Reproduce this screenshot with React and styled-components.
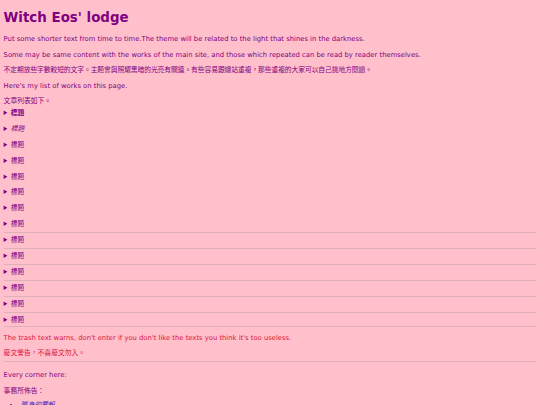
import React from 'react';
import styled, { createGlobalStyle } from 'styled-components';

const GlobalStyle = createGlobalStyle`
  html, body {
    margin: 0;
    background: #ffc0cb;
  }
  body {
    font-family: "DejaVu Sans", "Noto Sans CJK TC", sans-serif;
  }
`;

const works = [
  { title: '標題', bold: true },
  { title: '標題', italic: true },
  { title: '標題' },
  { title: '標題' },
  { title: '標題' },
  { title: '標題' },
  { title: '標題' },
  { title: '標題' },
  { title: '標題' },
  { title: '標題' },
  { title: '標題' },
  { title: '標題' },
  { title: '標題' },
  { title: '標題' },
];

const App = () => {
  return (
    <Page>
      <GlobalStyle />
      <Title>Witch Eos' lodge</Title>
      <Text>Put some shorter text from time to time.The theme will be related to the light that shines in the darkness.</Text>
      <Text>Some may be same content with the works of the main site, and those which repeated can be read by reader themselves.</Text>
      <Text $cjk>不定期放些字數較短的文字。主題會與照耀黑暗的光亮有關連。有些容易跟總站重複，那些重複的大家可以自己挑地方閱讀。</Text>
      <Text>Here's my list of works on this page.</Text>
      <Text>文章列表如下。</Text>
      <WorkList>
        {works.map((w, i) => (
          <Work key={i} $divided={i >= 8} $bold={w.bold} $italic={w.italic}>
            <summary>{w.title}</summary>
          </Work>
        ))}
      </WorkList>
      <Rule />
      <Warn>The trash text warns, don't enter if you don't like the texts you think it's too useless.</Warn>
      <Warn>廢文警告，不喜廢文勿入。</Warn>
      <Rule $gap />
      <Text>Every corner here:</Text>
      <Text>事務所佈告：</Text>
      <Links>
        <li><a href="#">隨身的電報</a></li>
      </Links>
    </Page>
  );
};

const Page = styled.div`
  padding: 8px 3.6px 0;
  color: #800080;
`;

const Title = styled.h1`
  margin: 0 0 4px;
  font-size: 13.4px;
  line-height: 20px;
  font-weight: bold;
  color: #800080;
`;

const Text = styled.p`
  margin: 0;
  font-size: 6.8px;
  line-height: 15.5px;
  letter-spacing: ${p => (p.$cjk ? '-0.1px' : 'normal')};
`;

const WorkList = styled.div`
  margin-top: -3.6px;
`;

const Work = styled.details`
  font-size: 6.8px;
  line-height: 15.9px;
  border-top: ${p => (p.$divided ? '1px solid #deb0ba' : '0')};
  margin-top: ${p => (p.$divided ? '-1px' : '0')};
  summary {
    cursor: pointer;
    font-weight: ${p => (p.$bold ? 'bold' : 'normal')};
    font-style: ${p => (p.$italic ? 'italic' : 'normal')};
  }
`;

const Rule = styled.hr`
  border: 0;
  border-top: 1px solid #deb0ba;
  margin: ${p => (p.$gap ? '-1px 0 6px' : '-3px 0 4px')};
  height: 0;
`;

const Warn = styled.p`
  margin: 0;
  font-size: 6.8px;
  line-height: 15.8px;
  color: #dc143c;
`;

const Links = styled.ul`
  margin: 0;
  padding-left: 17px;
  font-size: 6.8px;
  line-height: 13px;
  a {
    color: #4a20c0;
    font-style: italic;
  }
`;

export default App;
